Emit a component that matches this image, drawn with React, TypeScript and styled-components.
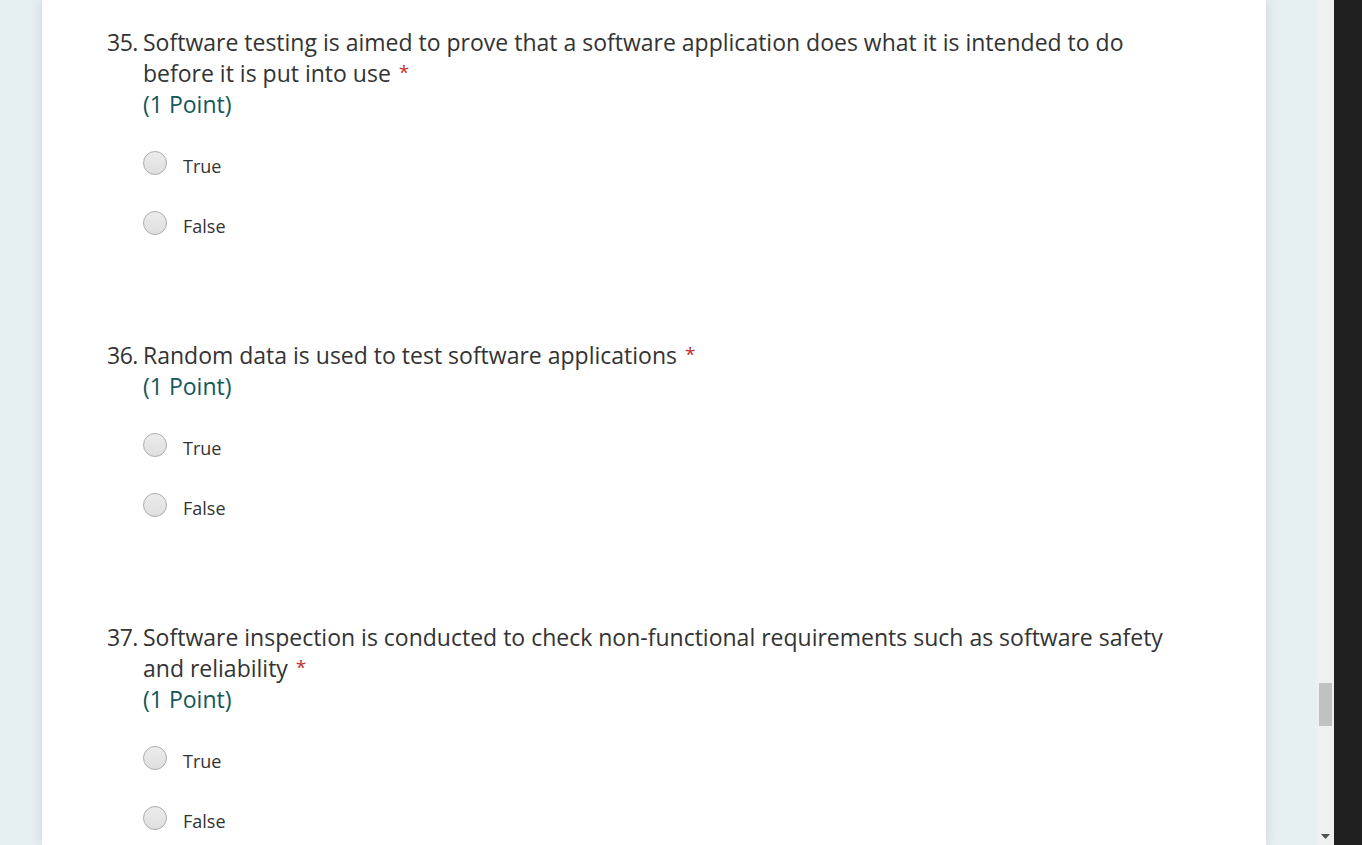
import styled, { createGlobalStyle } from 'styled-components';

const GlobalStyle = createGlobalStyle`
  html, body {
    margin: 0;
    padding: 0;
    height: 100%;
    overflow: hidden;
  }
  body {
    font-family: "Open Sans", "Noto Sans", "Liberation Sans", sans-serif;
    color: #333333;
  }
`

type Question = {
  num: number
  title: string
}

const questions: Question[] = [
  { num: 35, title: 'Software testing is aimed to prove that a software application does what it is intended to do before it is put into use' },
  { num: 36, title: 'Random data is used to test software applications' },
  { num: 37, title: 'Software inspection is conducted to check non-functional requirements such as software safety and reliability' },
]

const Radio = ({ label }: { label: string }) => (
  <Option>
    <Circle />
    <OptionLabel>{label}</OptionLabel>
  </Option>
)

const App = () => {
  return (
    <Screen>
      <GlobalStyle />
      <Page>
        <Card>
          {questions.map((q) => (
            <QuestionBlock key={q.num}>
              <Num>{q.num}.</Num>
              <QuestionBody>
                <Title>
                  {q.title}
                  <Required>*</Required>
                </Title>
                <Points>(1 Point)</Points>
                <Options>
                  <Radio label="True" />
                  <Radio label="False" />
                </Options>
              </QuestionBody>
            </QuestionBlock>
          ))}
        </Card>
      </Page>
      <Scrollbar>
        <Track>
          <Thumb />
        </Track>
        <Arrow>
          <svg width="9" height="5" viewBox="0 0 9 5">
            <path d="M0 0 H9 L4.5 5 Z" fill="#505050" />
          </svg>
        </Arrow>
      </Scrollbar>
      <DarkStrip />
    </Screen>
  )
}

export default App

const Screen = styled.div`
  display: flex;
  width: 1362px;
  height: 845px;
  overflow: hidden;
`

const Page = styled.div`
  flex: 1;
  background: #e6eff2;
  overflow: hidden;
`

const Card = styled.div`
  margin-left: 42px;
  width: 1224px;
  min-height: 845px;
  background: #ffffff;
  box-shadow: 0 0 12px rgba(0, 40, 60, 0.12);
  padding: 27px 80px 0 65px;
  box-sizing: border-box;
`

const QuestionBlock = styled.div`
  display: flex;
  margin-bottom: 105px;
`

const Num = styled.div`
  width: 36px;
  flex: none;
  font-size: 23px;
  line-height: 31px;
  letter-spacing: -0.5px;
  color: #333333;
`

const QuestionBody = styled.div`
  flex: 1;
`

const Title = styled.div`
  font-size: 23px;
  line-height: 31px;
  color: #333333;
`

const Required = styled.span`
  position: relative;
  top: -3px;
  line-height: 1;
  color: #c0302b;
  font-size: 19px;
  margin-left: 8px;
`

const Points = styled.div`
  font-size: 23px;
  line-height: 31px;
  color: #11585a;
`

const Options = styled.div`
  display: flex;
  flex-direction: column;
  gap: 36px;
  margin-top: 31px;
`

const Option = styled.div`
  display: flex;
  align-items: center;
  height: 24px;
`

const Circle = styled.span`
  width: 24px;
  height: 24px;
  border-radius: 50%;
  border: 1px solid #acacac;
  background: linear-gradient(#ececec, #dfdfdf);
  box-sizing: border-box;
  flex: none;
`

const OptionLabel = styled.span`
  margin-left: 16px;
  font-size: 18px;
  color: #333333;
  position: relative;
  top: 3px;
`

const Scrollbar = styled.div`
  width: 17px;
  flex: none;
  background: #f0f0f0;
  display: flex;
  flex-direction: column;
`

const Track = styled.div`
  flex: 1;
  padding-top: 683px;
  display: flex;
  justify-content: center;
`

const Thumb = styled.div`
  width: 13px;
  height: 43px;
  background: #c1c1c1;
`

const Arrow = styled.div`
  height: 17px;
  display: flex;
  align-items: center;
  justify-content: center;
`

const DarkStrip = styled.div`
  width: 28px;
  flex: none;
  background: #202020;
`
